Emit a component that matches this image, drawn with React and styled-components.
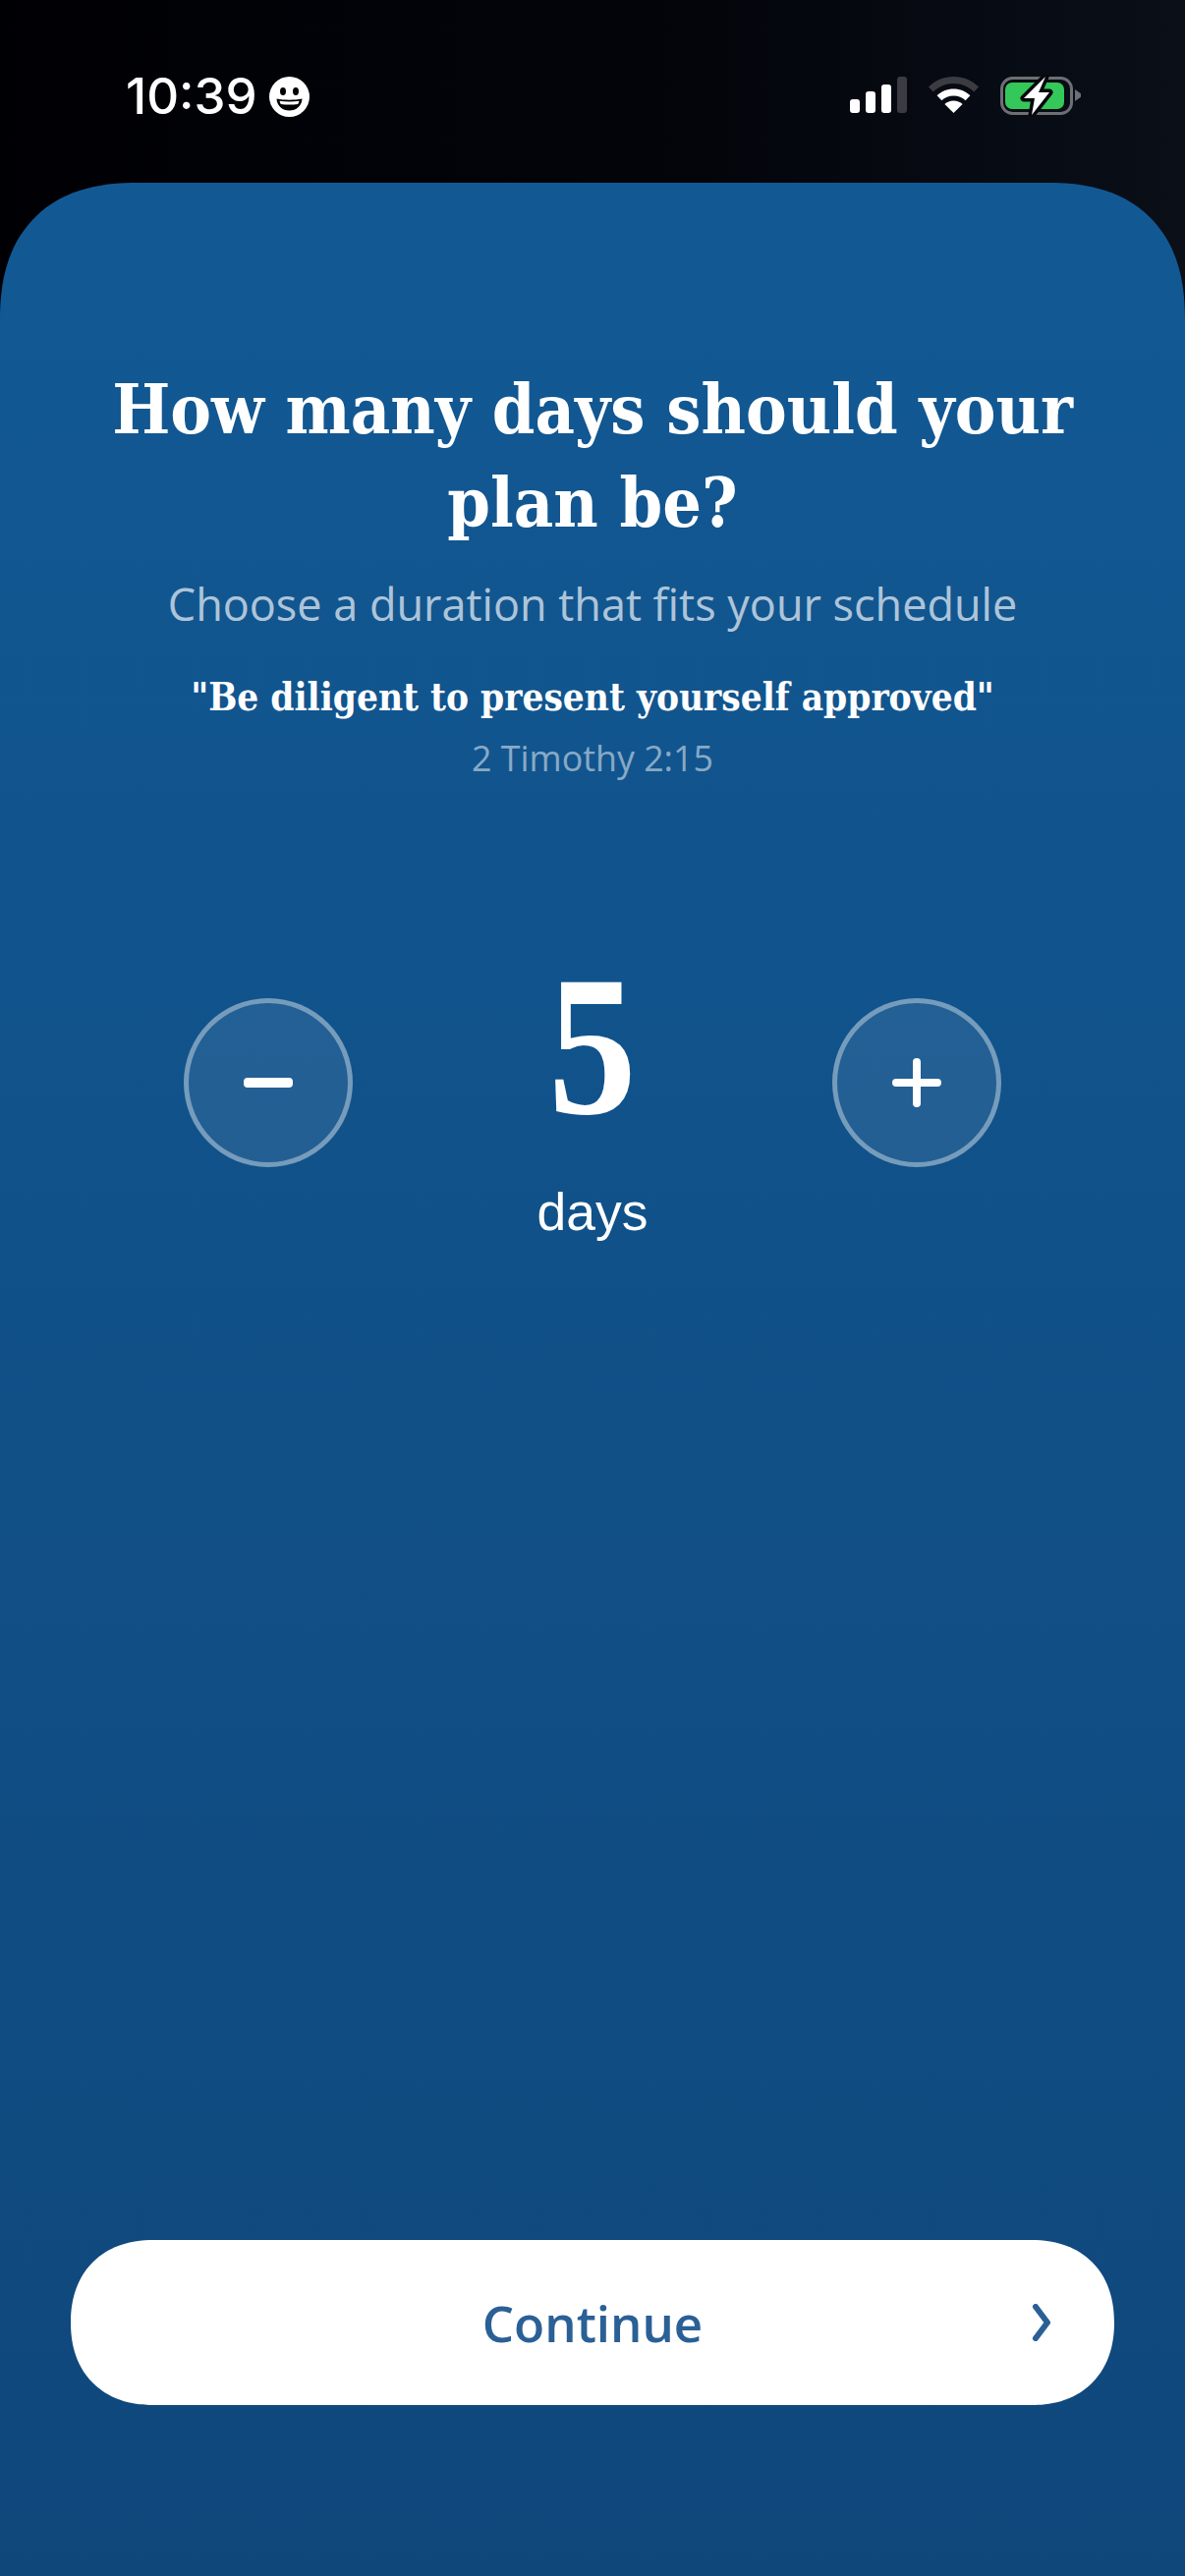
import React from 'react';
import styled, { createGlobalStyle } from 'styled-components';

const GlobalStyle = createGlobalStyle`
  html, body {
    margin: 0;
    padding: 0;
    background: #000;
  }
`;

const Screen = styled.div`
  width: 1206px;
  height: 2622px;
  display: flex;
  flex-direction: column;
  overflow: hidden;
  background: linear-gradient(90deg, #000004 0%, #03050b 60%, #0a0f18 100%);
`;

const StatusBar = styled.div`
  height: 186px;
  flex: none;
  display: flex;
  align-items: flex-start;
  justify-content: space-between;
  padding: 70px 106px 0 128px;
  box-sizing: border-box;
`;

const TimeGroup = styled.div`
  display: flex;
  align-items: center;
  gap: 12px;
  color: #fff;
  font: 500 51px/56px Inter, sans-serif;
`;

const StatusIcons = styled.div`
  display: flex;
  align-items: flex-start;
  gap: 22px;
  padding-top: 8px;
`;

const Card = styled.main`
  flex: 1;
  display: flex;
  flex-direction: column;
  align-items: center;
  padding-top: 183px;
  border-radius: 140px 140px 0 0;
  corner-shape: superellipse(1.25);
  background: linear-gradient(180deg, #125994 0%, #0f477b 100%);
`;

const Title = styled.h1`
  margin: 0;
  width: 1060px;
  color: #fff;
  text-align: center;
  font-family: "DejaVu Serif", serif;
  font-stretch: condensed;
  font-weight: 700;
  font-size: 69.500px;
  line-height: 95px;
`;

const Subtitle = styled.p`
  margin: 24px 0 0;
  color: rgba(255, 255, 255, 0.68);
  font: 400 45px/64px "Open Sans", sans-serif;
`;

const Verse = styled.p`
  margin: 33px 0 0;
  color: #fff;
  font-family: "DejaVu Serif", serif;
  font-stretch: condensed;
  font-weight: 700;
  font-size: 38.400px;
  line-height: 60px;
`;

const Reference = styled.p`
  margin: 6px 0 0;
  color: rgba(255, 255, 255, 0.5);
  font: 400 35.800px/50px "Open Sans", sans-serif;
`;

const Stepper = styled.section`
  width: 832px;
  margin-top: 152px;
  display: flex;
  justify-content: space-between;
  align-items: flex-start;
`;

const RoundButton = styled.button`
  width: 172px;
  height: 172px;
  margin-top: 68px;
  padding: 0;
  display: flex;
  align-items: center;
  justify-content: center;
  box-sizing: border-box;
  border: 5px solid rgba(255, 255, 255, 0.38);
  border-radius: 50%;
  background: rgba(255, 255, 255, 0.08);
`;

const Count = styled.div`
  display: flex;
  flex-direction: column;
  align-items: center;
`;

const Number = styled.div`
  color: #fff;
  font: 700 204px/232px "Liberation Serif", serif;
  transform: scaleX(0.88);
`;

const Unit = styled.div`
  margin-top: 23px;
  color: #fff;
  font: 400 53.500px/62px "Liberation Sans", sans-serif;
`;

const Spacer = styled.div`
  flex: 1;
`;

const ContinueButton = styled.button`
  position: relative;
  width: 1062px;
  height: 168px;
  margin-bottom: 174px;
  padding: 0;
  display: flex;
  align-items: center;
  justify-content: center;
  border: 0;
  border-radius: 84px;
  corner-shape: superellipse(1.15);
  background: #fff;
  color: #2a6095;
  font: 600 51px/70px "Open Sans", sans-serif;
`;

const Chevron = styled.svg`
  position: absolute;
  right: 64px;
  top: 65px;
`;

function SmileIcon() {
  return (
    <svg width="41" height="41" viewBox="0 0 41 41">
      <circle cx="20.5" cy="20.5" r="20.5" fill="#fff" />
      <ellipse cx="14" cy="15" rx="3" ry="4" fill="#000" />
      <ellipse cx="27" cy="15" rx="3" ry="4" fill="#000" />
      <path d="M7.5 22.5c8 1.6 18 1.6 26 0-.4 7.5-6 12-13 12s-12.600-4.500-13-12z" fill="#000" />
      <path d="M10.500 24.700c6.500 1 13.500 1 20 0-.3 1.400-.7 2.500-1.300 3.300-5.800.8-11.600.8-17.400 0-.6-.8-1-1.900-1.300-3.300z" fill="#fff" />
    </svg>
  );
}

function SignalIcon() {
  return (
    <svg width="58" height="37" viewBox="0 0 58 37">
      <rect x="0" y="23" width="10" height="14" rx="3" fill="#fff" />
      <rect x="16" y="15" width="10" height="22" rx="3" fill="#fff" />
      <rect x="32" y="8" width="10" height="29" rx="3" fill="#fff" />
      <rect x="48" y="0" width="10" height="37" rx="3" fill="#3a3c42" />
    </svg>
  );
}

function WifiIcon() {
  return (
    <svg width="51" height="37" viewBox="0 0 51 37">
      <path d="M25.500 0C35.500 0 44.500 4 51 10.500l-4.800 5C40.800 10.200 33.500 7 25.500 7S10.200 10.200 4.800 15.500L0 10.500C6.500 4 15.500 0 25.500 0z" fill="#3a3c42" />
      <path d="M25.500 12.500c6.600 0 12.500 2.600 16.900 6.800l-4.800 5c-3.100-3-7.300-4.800-12.100-4.800s-9 1.800-12.100 4.800l-4.800-5c4.400-4.200 10.300-6.800 16.900-6.800z" fill="#fff" />
      <path d="M25.500 24.500c3.500 0 6.700 1.300 9.100 3.500L25.500 37l-9.100-9c2.400-2.200 5.600-3.500 9.100-3.500z" fill="#fff" />
    </svg>
  );
}

function BatteryIcon() {
  return (
    <svg width="82" height="42" viewBox="0 0 82 42" style={{ marginTop: -2 }}>
      <rect x="1.500" y="3.500" width="71" height="36" rx="11" fill="none" stroke="#6d6f74" strokeWidth="3" />
      <path d="M76 15l5 3.500a3 3 0 0 1 0 5L76 27z" fill="#6d6f74" />
      <rect x="5" y="8" width="60" height="27" rx="7" fill="#34c759" />
      <path d="M46 2L24 24h11l-3 17 18-23H39z" fill="#fff" stroke="#05070d" strokeWidth="7" strokeLinejoin="round" paintOrder="stroke" />
    </svg>
  );
}

export default function App() {
  return (
    <>
      <GlobalStyle />
      <Screen>
        <StatusBar>
          <TimeGroup>
            10:39
            <SmileIcon />
          </TimeGroup>
          <StatusIcons>
            <SignalIcon />
            <WifiIcon />
            <BatteryIcon />
          </StatusIcons>
        </StatusBar>
        <Card>
          <Title>How many days should your plan be?</Title>
          <Subtitle>Choose a duration that fits your schedule</Subtitle>
          <Verse>"Be diligent to present yourself approved"</Verse>
          <Reference>2 Timothy 2:15</Reference>
          <Stepper>
            <RoundButton aria-label="Fewer days">
              <svg width="50" height="10" viewBox="0 0 50 10">
                <rect width="50" height="10" rx="4" fill="#fff" />
              </svg>
            </RoundButton>
            <Count>
              <Number>5</Number>
              <Unit>days</Unit>
            </Count>
            <RoundButton aria-label="More days">
              <svg width="50" height="50" viewBox="0 0 50 50">
                <rect y="21" width="50" height="8" rx="4" fill="#fff" />
                <rect x="21" width="8" height="50" rx="4" fill="#fff" />
              </svg>
            </RoundButton>
          </Stepper>
          <Spacer />
          <ContinueButton>
            Continue
            <Chevron width="20" height="38" viewBox="0 0 20 38">
              <path d="M4 3l12 16L4 35" fill="none" stroke="#2a6095" strokeWidth="6" strokeLinecap="round" strokeLinejoin="round" />
            </Chevron>
          </ContinueButton>
        </Card>
      </Screen>
    </>
  );
}
